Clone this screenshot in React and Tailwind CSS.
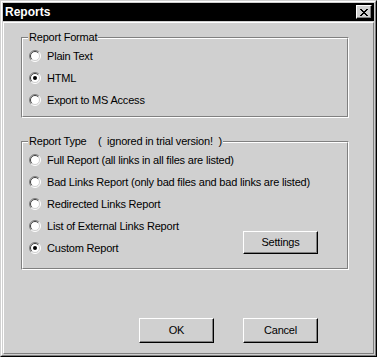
import React from "react";

function Radio({ checked }) {
  return (
    <svg width="12" height="12" viewBox="0 0 12 12" className="shrink-0">
      <circle cx="6" cy="6" r="5" fill="#ffffff" />
      <path d="M 2.1 9.9 A 5.5 5.5 0 0 1 9.9 2.1" stroke="#808080" strokeWidth="1" fill="none" />
      <path d="M 9.9 2.1 A 5.5 5.5 0 0 1 2.1 9.9" stroke="#ffffff" strokeWidth="1" fill="none" />
      <path d="M 2.8 9.2 A 4.5 4.5 0 0 1 9.2 2.8" stroke="#404040" strokeWidth="1" fill="none" />
      <path d="M 9.2 2.8 A 4.5 4.5 0 0 1 2.8 9.2" stroke="#d0d0d0" strokeWidth="1" fill="none" />
      {checked && <circle cx="6" cy="6" r="2" fill="#000000" />}
    </svg>
  );
}

function Row({ checked, children }) {
  return (
    <div className="flex h-[22px] items-center gap-[6px] pl-[6px]">
      <Radio checked={checked} />
      <span className="whitespace-pre">{children}</span>
    </div>
  );
}

function Group({ label, className, children }) {
  return (
    <div
      className={
        "relative ml-[17px] w-[328px] border border-t-[#808080] border-l-[#808080] border-b-white border-r-white " +
        className
      }
    >
      <span className="absolute left-[6px] top-[-7px] whitespace-pre bg-[#d0d0d0] px-px leading-[13px]">
        {label}
      </span>
      <div className="h-full border border-t-white border-l-white border-b-[#808080] border-r-[#808080] pt-[6px]">
        {children}
      </div>
    </div>
  );
}

function Button({ children, className }) {
  return (
    <div
      className={
        "flex items-center justify-center border border-t-white border-l-white border-b-black border-r-black bg-[#d0d0d0] shadow-[inset_-1px_-1px_#808080] " +
        className
      }
    >
      {children}
    </div>
  );
}

export default function App() {
  return (
    <div
      className="h-[357px] w-[377px] border border-t-[#d0d0d0] border-l-[#d0d0d0] border-b-black border-r-black bg-[#d0d0d0] text-[11px] tracking-[-0.2px] text-black"
      style={{ fontFamily: '"Liberation Sans", Arial, sans-serif' }}
    >
      <div className="flex h-full flex-col border border-t-white border-l-white border-b-[#808080] border-r-[#808080] p-px">
        <div className="flex h-[18px] shrink-0 items-center justify-between bg-black pl-[2px] pr-[2px]">
          <span className="text-[12px] font-bold tracking-normal text-white">Reports</span>
          <div className="flex h-[14px] w-[16px] items-center justify-center border border-t-white border-l-white border-b-black border-r-black bg-[#d0d0d0] shadow-[inset_-1px_-1px_#808080]">
            <svg width="8" height="7" viewBox="0 0 8 7">
              <path d="M0.5 0 L7.5 7 M1.5 0 L8.5 7 M7.5 0 L0.5 7 M8.5 0 L1.5 7" stroke="#000" strokeWidth="1" transform="translate(-0.5 0)" />
            </svg>
          </div>
        </div>
        <div className="mt-px flex flex-1 flex-col border border-t-white border-l-white border-b-[#808080] border-r-[#808080]">
          <Group label="Report Format" className="mt-[14px] h-[81px]">
            <Row>Plain Text</Row>
            <Row checked>HTML</Row>
            <Row>Export to MS Access</Row>
          </Group>
          <Group
            label={"Report Type    (  ignored in trial version!  )"}
            className="mt-[23px] h-[129px]"
          >
            <Row>Full Report (all links in all files are listed)</Row>
            <Row>Bad Links Report (only bad files and bad links are listed)</Row>
            <Row>Redirected Links Report</Row>
            <div className="flex">
              <div className="flex flex-col">
                <Row>List of External Links Report</Row>
                <Row checked>Custom Report</Row>
              </div>
              <Button className="ml-auto mr-[29px] mt-[16px] h-[23px] w-[75px]">Settings</Button>
            </div>
          </Group>
          <div className="mt-[48px] flex gap-[29px] pl-[135px]">
            <Button className="h-[25px] w-[75px]">OK</Button>
            <Button className="h-[25px] w-[75px]">Cancel</Button>
          </div>
        </div>
      </div>
    </div>
  );
}
